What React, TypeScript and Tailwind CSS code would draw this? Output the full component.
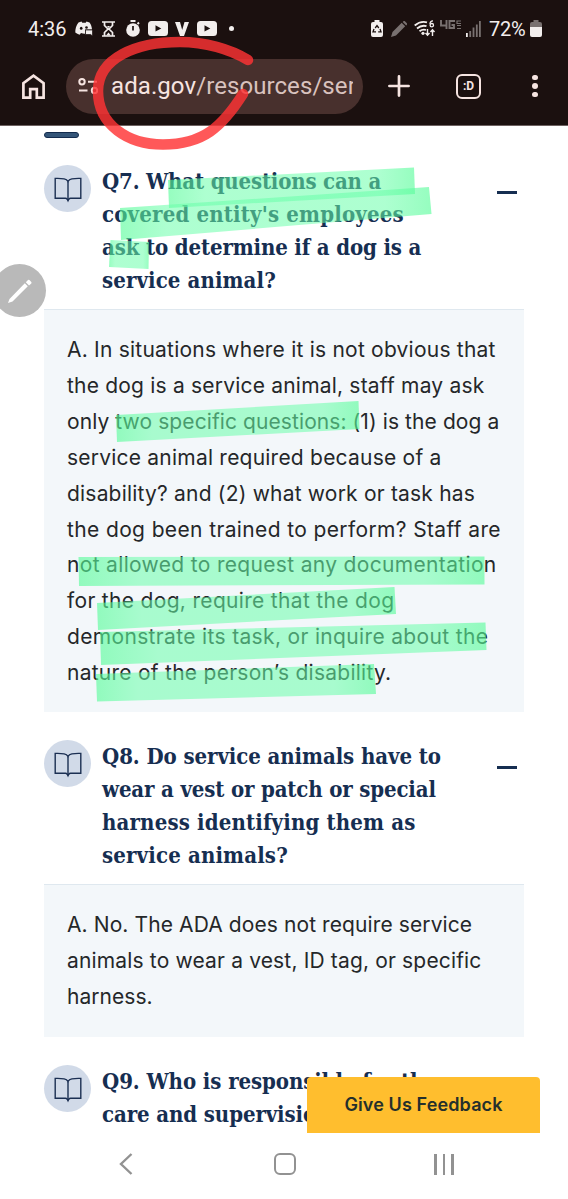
import type { ReactNode } from "react";

type Line = {
    text: string;
    className: string;
};

type Question = {
    id: number;
    title: Line[];
    answer: Line[];
};

const questions: Question[] = [
    {
        id: 7,
        title: [
            { text: "Q7. What questions can a", className: "tracking-[-0.18px]" },
            { text: "covered entity's employees", className: "tracking-[0.17px]" },
            { text: "ask to determine if a dog is a", className: "tracking-[-0.14px]" },
            { text: "service animal?", className: "tracking-[0.1px]" },
        ],
        answer: [
            { text: "A. In situations where it is not obvious that", className: "tracking-[0.22px]" },
            { text: "the dog is a service animal, staff may ask", className: "tracking-[0.2px]" },
            { text: "only two specific questions: (1) is the dog a", className: "tracking-[0.09px]" },
            { text: "service animal required because of a", className: "tracking-[0.22px]" },
            { text: "disability? and (2) what work or task has", className: "tracking-[0.2px]" },
            { text: "the dog been trained to perform? Staff are", className: "tracking-[0.37px]" },
            { text: "not allowed to request any documentation", className: "tracking-[0.33px]" },
            { text: "for the dog, require that the dog", className: "tracking-[0.32px]" },
            { text: "demonstrate its task, or inquire about the", className: "tracking-[0.34px]" },
            { text: "nature of the person’s disability.", className: "tracking-[0.26px]" },
        ],
    },
    {
        id: 8,
        title: [
            { text: "Q8. Do service animals have to", className: "tracking-[-0.08px]" },
            { text: "wear a vest or patch or special", className: "tracking-[-0.15px]" },
            { text: "harness identifying them as", className: "tracking-[0.15px]" },
            { text: "service animals?", className: "tracking-[0.15px]" },
        ],
        answer: [
            { text: "A. No. The ADA does not require service", className: "tracking-[0.1px]" },
            { text: "animals to wear a vest, ID tag, or specific", className: "tracking-[0.16px]" },
            { text: "harness.", className: "tracking-[0.05px]" },
        ],
    },
    {
        id: 9,
        title: [
            { text: "Q9. Who is responsible for the", className: "tracking-[-0.08px]" },
            { text: "care and supervision", className: "tracking-[-0.1px]" },
        ],
        answer: [],
    },
];

// corners of every marker stroke
const highlights = [
    "168,180 414,167.5 415,194 169,208",
    "120,208 429,187 431.5,214 121,240",
    "110.5,240 149,242 148.5,269 109,267",
    "116,415 358.5,401 359.5,429 117,442",
    "78.5,557 484.5,556.5 484.5,584.5 79,586",
    "97,603 394.5,587 396,614 98,630",
    "100,632 485.5,622.5 486.5,650 101,665",
    "96,674 374,664 376,694 97,701.5",
];

const YoutubeIcon = ({ className }: { className: string }) => (
    <svg viewBox="0 0 20 15" className={`h-[15px] w-5 ${className}`}>
        <rect width="20" height="15" rx="3.5" fill="#f2eeed" />
        <path d="M7.5 4.2v6.4l5.8-3.2z" fill="#1b100f" />
    </svg>
);

const BookIcon = () => (
    <div className="flex size-[47px] shrink-0 items-center justify-center rounded-full bg-[#d1dae8]">
        <svg viewBox="0 0 28 26" fill="none" stroke="#1b2f52" strokeWidth="1.4" className="mt-[3px] h-[26px] w-7">
            <path d="M14 4.5C12.5 1.7 9.5 1.2 1.2 1.4v19.8h10.3c1.6 0 2.2.8 2.5 2.2.3-1.4.9-2.2 2.5-2.2h10.3V1.4C18.5 1.2 15.5 1.7 14 4.5z" />
            <path d="M14 4.5v17" />
            <path d="M12.5 22h3L14 25.5z" fill="#1b2f52" stroke="none" />
        </svg>
    </div>
);

const StatusBar = () => (
    <div className="flex h-[57px] items-center pl-7 font-[Roboto] text-xl text-[#f2eeed]">
        <span className="w-[39px]">4:36</span>
        <svg viewBox="0 0 18 15" fill="#f2eeed" className="ml-2 h-[15px] w-[18px]">
            <path d="M3.5 1.5 6.5.5l.8 1.2h3.4l.8-1.2 3 1c1.5 2 2.4 4.5 2.5 7H10v4.2c-1.3.1-2.5-.4-4-.8L4.6 13.8C3 13.4 1.5 12.6.3 11.6.2 8 1.2 4.5 3.5 1.5z" />
            <ellipse cx="6.2" cy="7.2" rx="1.3" ry="1.5" fill="#1b100f" />
            <ellipse cx="11.5" cy="6.5" rx="1.3" ry="1.3" fill="#1b100f" />
            <path d="M10.5 9h7v6l-1.8-1.5h-5.2z" stroke="#1b100f" strokeWidth="0.7" />
        </svg>
        <svg viewBox="0 0 13 16" fill="none" stroke="#f2eeed" strokeWidth="1.7" className="ml-[9px] h-4 w-[13px]">
            <path d="M0 1h13M0 15h13M2.5 1v3.5L6 8l-3.5 3.5V15M10.5 1v3.5L7 8l3.5 3.5V15" />
            <path d="M4 14.5 6.5 11.5 9 14.5zM5 5h3L6.5 7z" fill="#f2eeed" stroke="none" />
        </svg>
        <svg viewBox="0 0 14 17" className="ml-[11px] h-[17px] w-3.5">
            <circle cx="7" cy="10" r="6.8" fill="#f2eeed" />
            <path d="M4.5 1h5M11.5 4l1.5-1.5" stroke="#f2eeed" strokeWidth="1.9" />
            <path d="M7 6v4.5" stroke="#1b100f" strokeWidth="1.7" />
        </svg>
        <YoutubeIcon className="ml-2" />
        <svg viewBox="0 0 14 14" className="ml-[7px] h-3.5 w-3.5">
            <path d="M0 0h5l2.2 8L9.5 0H14L9 14H5z" fill="#f2eeed" />
        </svg>
        <YoutubeIcon className="ml-2" />
        <span className="ml-3 size-[5px] rounded-full bg-[#f2eeed]" />

        <svg viewBox="0 0 12 17" className="ml-[137px] h-[17px] w-3">
            <path d="M3.5 0h5v2H10q2 0 2 2v11q0 2-2 2H2q-2 0-2-2V4q0-2 2-2h1.5z" fill="#f2eeed" />
            <path d="M4.2 8 6 5.5 7.8 8M9 9l1 2.8H7.2M3 9l-1 2.8h3" fill="none" stroke="#1b100f" strokeWidth="1.3" />
        </svg>
        <svg viewBox="0 0 16 16" fill="#797170" className="ml-2 size-4">
            <path d="M0 16l1.5-5L10.7 1.8l3.5 3.5L5 14.5zM11.7.9l.7-.7q.8-.5 1.5 0l2 2q.5.8 0 1.5l-.7.7z" />
        </svg>
        <svg viewBox="0 0 22 17" fill="none" stroke="#f2eeed" strokeWidth="1.8" className="ml-[7px] h-[17px] w-[22px]">
            <path d="M.7 5.5Q6.500.5 13 2.3M3 8.5Q7.5 4.7 12.5 6.2M5.5 11.3Q8.5 9 12 10" />
            <circle cx="9" cy="13.3" r="1.6" fill="#f2eeed" stroke="none" />
            <path d="M19 .8q-3 0-3 3.3" strokeWidth="1.3" />
            <circle cx="17.8" cy="5.2" r="1.7" strokeWidth="1.3" />
            <path d="M13.5 9v6M11.5 13l2 2.3 2-2.3M18.5 16v-6M16.5 12l2-2.3 2 2.3" strokeWidth="1.4" />
        </svg>
        <svg viewBox="0 0 22 10" fill="none" stroke="#797170" strokeWidth="1.9" className="mb-[7px] ml-1 h-2.5 w-[22px]">
            <path d="M1 0v5.5h6M6.5 0v9M15 1H9.5v7H14V5h-2.5" />
            <path d="M21 1h-4v2.5h4M21 5.5h-4M21 8.5h-4" strokeWidth="1.2" />
        </svg>
        <svg viewBox="0 0 15 16" fill="#797170" className="ml-1 h-4 w-[15px]">
            <path d="M0 12h1.8v4H0z" fill="#f2eeed" />
            <path d="M3.3 10h1.8v6H3.3zM6.6 6.5h1.8V16H6.6zM9.9 3.5h1.8V16H9.9zM13 0h1.8v16H13z" />
        </svg>
        <span className="ml-2 w-[39px] tracking-[-0.2px]">72%</span>
        <svg viewBox="0 0 12 17" className="ml-0.5 h-[17px] w-3">
            <path d="M3.5 0h5v2H10q2 0 2 2v3H0V4q0-2 2-2h1.5z" fill="#797170" />
            <path d="M0 7h12v8q0 2-2 2H2q-2 0-2-2z" fill="#f2eeed" />
        </svg>
    </div>
);

const AddressBar = () => (
    <div className="mt-px flex h-[56px] items-center pl-[22px] text-[#f6e4e1]">
        <svg viewBox="0 0 23 25" fill="none" stroke="#f6e4e1" strokeWidth="2.7" className="h-[25px] w-[23px]">
            <path d="M1.4 23.6V9.2L11.5 1.7 21.6 9.2v14.4h-6.8v-8.4H8.2v8.4z" />
        </svg>
        <div className="ml-[21px] flex h-[55px] w-[297px] items-center rounded-full bg-[#48302d] pl-3">
            <svg viewBox="0 0 20 16" fill="none" stroke="#f6e4e1" strokeWidth="2" className="h-4 w-5 shrink-0">
                <circle cx="4" cy="3.7" r="2.7" />
                <path d="M10 3.7h9M1 12.5h8.5" />
                <circle cx="16.5" cy="12.5" r="2.7" />
            </svg>
            <div className="ml-[13px] w-[242px] overflow-hidden font-[Roboto] text-2xl tracking-[0.08px] whitespace-nowrap">
                ada.gov<span className="text-[#d9c2be]">/resources/ser</span>
            </div>
        </div>
        <svg viewBox="0 0 22 22" stroke="#f6e4e1" strokeWidth="2.7" strokeLinecap="round" className="ml-[25px] size-[22px]">
            <path d="M11 1.4v19.2M1.4 11h19.2" />
        </svg>
        <div className="ml-[46px] flex size-[25px] items-center justify-center rounded-[6px] border-[2.5px] border-[#f6e4e1] font-[Roboto] text-xs font-bold">
            :D
        </div>
        <div className="ml-[51px] flex flex-col gap-[3px]">
            <span className="size-[5.5px] rounded-full bg-[#f6e4e1]" />
            <span className="size-[5.5px] rounded-full bg-[#f6e4e1]" />
            <span className="size-[5.5px] rounded-full bg-[#f6e4e1]" />
        </div>
    </div>
);

const TextLines = ({ lines }: { lines: Line[] }): ReactNode =>
    lines.map((line) => (
        <span key={line.text} className={`block whitespace-nowrap ${line.className}`}>
            {line.text}
        </span>
    ));

const QuestionItem = ({ item }: { item: Question }) => (
    <section>
        <div className="flex items-start">
            <BookIcon />
            <h2 className="ml-[11px] flex-1 font-['DejaVu_Serif_Condensed','DejaVu_Serif',serif] text-[22px] leading-[33px] font-bold text-[#162e51]">
                <TextLines lines={item.title} />
            </h2>
            {item.answer.length > 0 && <span className="mt-[26px] mr-[7px] h-[3px] w-5 bg-[#162e51]" />}
        </div>
        {item.answer.length > 0 && (
            <div className="mt-[12px] mb-[28px] border-t border-[#dfe8ef] bg-[#f3f7fa] pt-[22px] pr-4 pb-[21.4px] pl-[23px] font-[Inter] text-[21px] leading-[35.9px] text-[#252729]">
                <TextLines lines={item.answer} />
            </div>
        )}
    </section>
);

const Markings = () => (
    <svg viewBox="0 0 568 1199" className="pointer-events-none absolute inset-0 h-[1199px] w-[568px]">
        <defs>
            <linearGradient id="marker">
                <stop offset="0" stopColor="#55fc98" stopOpacity="0.62" />
                <stop offset="0.15" stopColor="#68ffa9" stopOpacity="0.54" />
                <stop offset="0.85" stopColor="#68ffa9" stopOpacity="0.54" />
                <stop offset="1" stopColor="#55fc98" stopOpacity="0.62" />
            </linearGradient>
        </defs>
        {highlights.map((points) => (
            <polygon key={points} points={points} fill="url(#marker)" />
        ))}
        <path
            d="M248 60C230 49 205 42 180 42C136 42 98 58 98 91C98 125 128 144.5 163 144.5C203 144.5 222 127 243 94"
            fill="none"
            stroke="#ff3335"
            strokeOpacity="0.82"
            strokeWidth="10.5"
            strokeLinecap="round"
        />
    </svg>
);

const App = () => {
    return (
        <div className="relative flex h-[1199px] w-[568px] flex-col overflow-hidden bg-white">
            {/* TOP */}
            <header className="h-[126px] shrink-0 border-b border-[#6d6160] bg-[#1b100f]">
                <StatusBar />
                <AddressBar />
            </header>
            {/* QUESTIONS */}
            <main className="h-[1007px] shrink-0 overflow-hidden pr-11 pl-11">
                <div className="mt-1.5 mb-[27px] h-1.5 w-[35px] rounded-[3px] border-[1.5px] border-[#132b4d] bg-[#345578]" />
                {questions.map((item) => (
                    <QuestionItem key={item.id} item={item} />
                ))}
            </main>
            {/* NAVIGATION */}
            <nav className="flex h-[66px] items-center pb-1 pl-[119px] text-[#929292]">
                <svg viewBox="0 0 14 22" fill="none" stroke="currentColor" strokeWidth="2.4" className="h-[22px] w-3.5">
                    <path d="M12.5 1 2 11l10.5 10" />
                </svg>
                <span className="ml-[141px] size-[22px] rounded-[6px] border-[2.5px] border-[#929292]" />
                <div className="ml-[138px] flex gap-[6px]">
                    <span className="h-[21px] w-[2.5px] bg-[#929292]" />
                    <span className="h-[21px] w-[2.5px] bg-[#929292]" />
                    <span className="h-[21px] w-[2.5px] bg-[#929292]" />
                </div>
            </nav>
            <button className="absolute top-[1077px] left-[307px] h-14 w-[233px] rounded-t-[4px] bg-[#ffbe2e] font-[Inter] text-lg font-semibold tracking-[0.12px] text-[#252f2c]">
                Give Us Feedback
            </button>
            <div className="absolute top-[264px] -left-[7px] flex size-[53px] items-center justify-center rounded-full bg-[#b9b9b9]">
                <svg viewBox="0 0 24 24" fill="white" className="size-6">
                    <path d="M0 24 1.5 20 16.8 4.2l3 3L4.5 22.5zM17.8 3.2 20 .9q.7-.5 1.4.1L23.3 3q.5.7 0 1.4l-2.3 2z" />
                </svg>
            </div>
            <Markings />
        </div>
    );
};

export default App;
